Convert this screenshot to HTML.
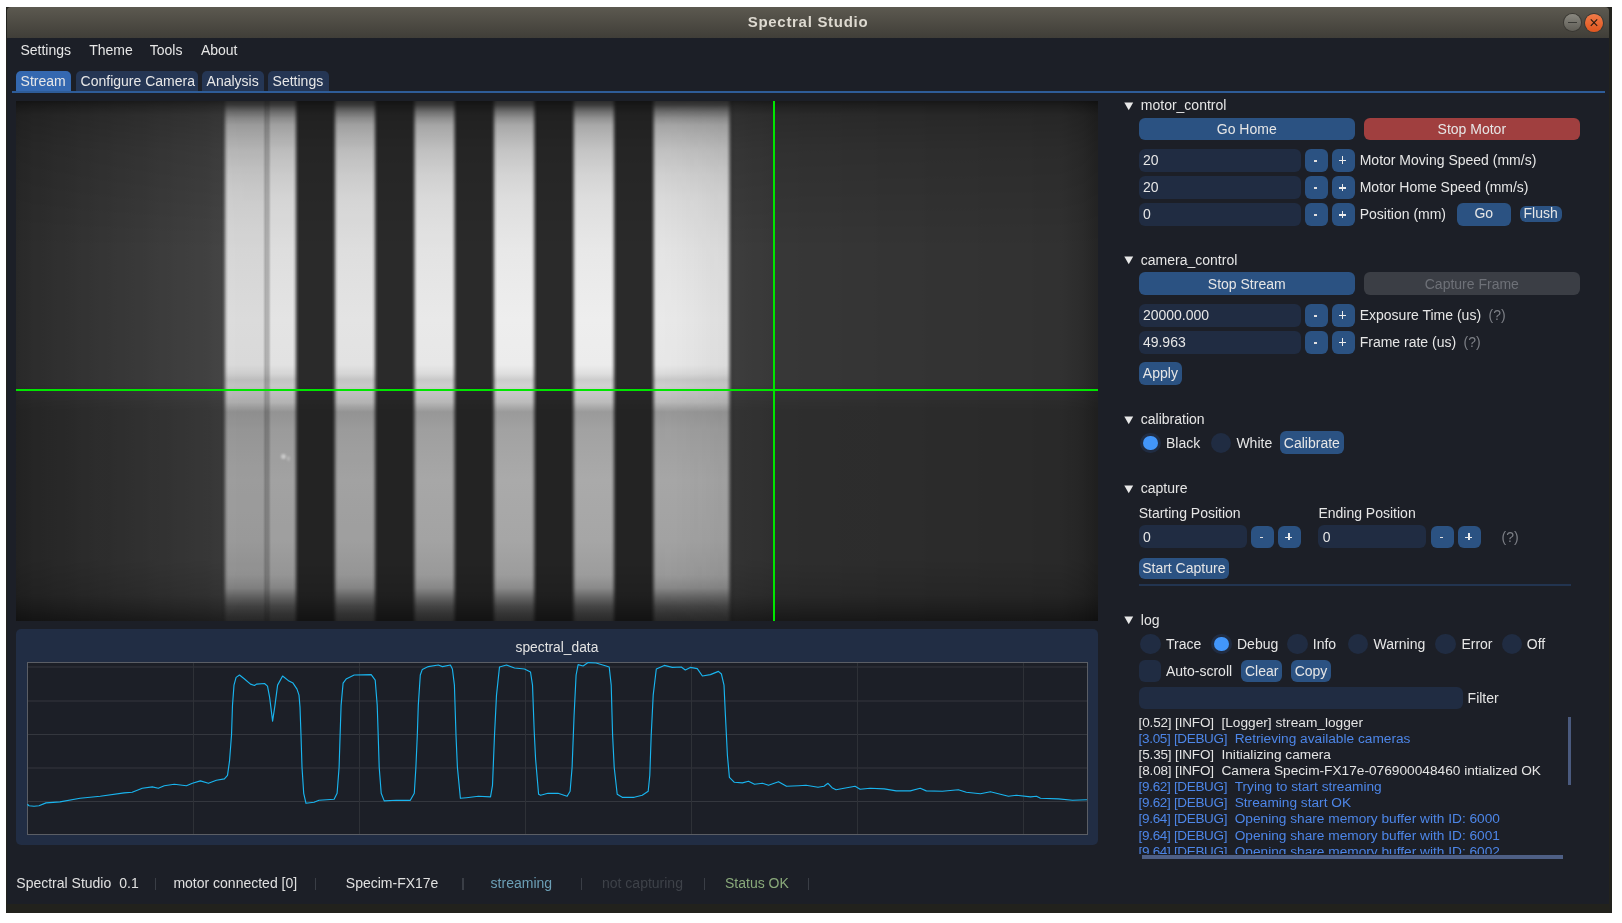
<!DOCTYPE html><html><head><meta charset="utf-8"><title>Spectral Studio</title><style>
*{margin:0;padding:0;box-sizing:border-box}
html,body{width:1622px;height:923px;overflow:hidden;background:#ffffff;font-family:"Liberation Sans",sans-serif}
.a{position:absolute}
.t{position:absolute;font-size:14px;line-height:16px;white-space:pre;color:#e3e3e3;-webkit-font-smoothing:antialiased}
body{will-change:transform}
</style></head><body>
<div class="a" style="left:6.0px;top:7.0px;width:1606.0px;height:906.0px;background:#22221d;"></div>
<div class="a" style="left:7.0px;top:38.0px;width:1602.0px;height:866.0px;background:#1c1f27;"></div>
<div class="a" style="left:7.0px;top:7.0px;width:1602.0px;height:31.0px;background:linear-gradient(#5c5950,#403e38);border-radius:4px 4px 0 0;"></div>
<div class="t" style="left:608px;width:400px;text-align:center;top:14.2px;font-size:15px;letter-spacing:0.7px;font-weight:bold;color:#dedad1">Spectral Studio</div>
<div class="a" style="left:1563.5px;top:13.8px;width:17.6px;height:17.6px;border-radius:50%;background:linear-gradient(#8a8880,#5f5d56);box-shadow:0 0 0 1px #3a3833"></div>
<div class="a" style="left:1567.5px;top:21.8px;width:9.0px;height:1.5px;background:#3a3a36;"></div>
<div class="a" style="left:1585.2px;top:13.8px;width:17.8px;height:17.8px;border-radius:50%;background:linear-gradient(#f07a48,#e0561f);box-shadow:0 0 0 1px #3a3833"></div>
<svg class="a" style="left:1585px;top:14px" width="18" height="18"><path d="M5.8 5.4 L12.2 11.8 M12.2 5.4 L5.8 11.8" stroke="#2a1a10" stroke-width="1.2"/></svg>
<div class="t" style="left:20.4px;top:41.7px;color:#e6e6e6;">Settings</div>
<div class="t" style="left:89.2px;top:41.7px;color:#e6e6e6;">Theme</div>
<div class="t" style="left:149.8px;top:41.7px;color:#e6e6e6;">Tools</div>
<div class="t" style="left:200.9px;top:41.7px;color:#e6e6e6;">About</div>
<div class="a" style="left:16.0px;top:71.0px;width:55.0px;height:21.0px;background:#3468b0;border-radius:5px 5px 0 0;"></div>
<div class="t" style="left:20.6px;top:73.1px;color:#e8e8e8;">Stream</div>
<div class="a" style="left:76.0px;top:71.0px;width:122.0px;height:21.0px;background:#253654;border-radius:5px 5px 0 0;"></div>
<div class="t" style="left:80.6px;top:73.1px;color:#e8e8e8;">Configure Camera</div>
<div class="a" style="left:202.0px;top:71.0px;width:61.5px;height:21.0px;background:#253654;border-radius:5px 5px 0 0;"></div>
<div class="t" style="left:206.6px;top:73.1px;color:#e8e8e8;">Analysis</div>
<div class="a" style="left:268.0px;top:71.0px;width:61.0px;height:21.0px;background:#253654;border-radius:5px 5px 0 0;"></div>
<div class="t" style="left:272.6px;top:73.1px;color:#e8e8e8;">Settings</div>
<div class="a" style="left:12.0px;top:91.0px;width:1593.0px;height:2.0px;background:#2e5c98;"></div>
<div class="a" style="left:16px;top:101px;width:1082px;height:519.5px;background:linear-gradient(to bottom,#737373 0px,#999999 5px,#c7c7c7 14px,#e0e0e0 49px,#ffffff 149px,#ffffff 283px,#ebebeb 293px,#d6d6d6 309px,#d6d6d6 459px,#bdbdbd 494px,#999999 507px,#737373 519px),linear-gradient(to right,#282828 0px,#2a2a2a 6px,#2b2b2b 12px,#2d2d2d 18px,#2d2d2d 24px,#2e2e2e 30px,#2f2f2f 36px,#303030 42px,#303030 48px,#313131 54px,#323232 60px,#333333 66px,#333333 72px,#343434 78px,#353535 84px,#353535 90px,#363636 96px,#373737 102px,#373737 108px,#383838 114px,#393939 120px,#393939 126px,#3a3a3a 132px,#3b3b3b 138px,#3c3c3c 144px,#3c3c3c 150px,#3d3d3d 156px,#3e3e3e 162px,#3e3e3e 168px,#3f3f3f 174px,#404040 180px,#404040 186px,#414141 192px,#434343 198px,#444444 204px,#3e3e3e 210px,#363636 216px,#2d2d2d 222px,#2a2a2a 228px,#2a2a2a 234px,#2a2a2a 240px,#2a2a2a 246px,#2a2a2a 252px,#2a2a2a 258px,#2a2a2a 264px,#2a2a2a 270px,#2a2a2a 276px,#2a2a2a 282px,#2a2a2a 288px,#2a2a2a 294px,#2a2a2a 300px,#2a2a2a 306px,#2a2a2a 312px,#2a2a2a 318px,#2a2a2a 324px,#2a2a2a 330px,#2a2a2a 336px,#2a2a2a 342px,#2a2a2a 348px,#2a2a2a 354px,#2a2a2a 360px,#2a2a2a 366px,#2a2a2a 372px,#2a2a2a 378px,#2a2a2a 384px,#2a2a2a 390px,#2a2a2a 396px,#2a2a2a 402px,#2a2a2a 408px,#2a2a2a 414px,#2a2a2a 420px,#2a2a2a 426px,#2a2a2a 432px,#2a2a2a 438px,#2a2a2a 444px,#2a2a2a 450px,#2a2a2a 456px,#2a2a2a 462px,#2a2a2a 468px,#2a2a2a 474px,#2a2a2a 480px,#2a2a2a 486px,#2a2a2a 492px,#2a2a2a 498px,#2a2a2a 504px,#2a2a2a 510px,#2a2a2a 516px,#2a2a2a 522px,#2a2a2a 528px,#2a2a2a 534px,#2a2a2a 540px,#2a2a2a 546px,#2a2a2a 552px,#2a2a2a 558px,#2a2a2a 564px,#2a2a2a 570px,#2a2a2a 576px,#2a2a2a 582px,#2a2a2a 588px,#2a2a2a 594px,#2a2a2a 600px,#2a2a2a 606px,#2a2a2a 612px,#2a2a2a 618px,#2a2a2a 624px,#2a2a2a 630px,#2a2a2a 636px,#2a2a2a 642px,#2a2a2a 648px,#2a2a2a 654px,#2a2a2a 660px,#2a2a2a 666px,#2a2a2a 672px,#2a2a2a 678px,#2a2a2a 684px,#2a2a2a 690px,#2a2a2a 696px,#2a2a2a 702px,#303030 708px,#393939 714px,#3d3d3d 720px,#3c3c3c 726px,#3b3b3b 732px,#3a3a3a 738px,#3a3a3a 744px,#393939 750px,#383838 756px,#373737 762px,#373737 768px,#373737 774px,#373737 780px,#363636 786px,#363636 792px,#363636 798px,#363636 804px,#363636 810px,#363636 816px,#363636 822px,#353535 828px,#353535 834px,#353535 840px,#353535 846px,#353535 852px,#353535 858px,#343434 864px,#343434 870px,#343434 876px,#343434 882px,#343434 888px,#343434 894px,#343434 900px,#343434 906px,#333333 912px,#333333 918px,#333333 924px,#333333 930px,#333333 936px,#333333 942px,#333333 948px,#333333 954px,#333333 960px,#323232 966px,#323232 972px,#323232 978px,#323232 984px,#323232 990px,#323232 996px,#323232 1002px,#323232 1008px,#323232 1014px,#313131 1020px,#313131 1026px,#313131 1032px,#313131 1038px,#313131 1044px,#303030 1050px,#2e2e2e 1056px,#2d2d2d 1062px,#2b2b2b 1068px,#282828 1074px,#252525 1080px);background-blend-mode:multiply"></div>
<div class="a" style="left:16px;top:101px;width:1082px;height:519.5px;background:linear-gradient(to bottom,#2c2c2c 0px,#3c3c3c 4px,#545454 7px,#707070 11px,#909090 17px,#a8a8a8 24px,#b4b4b4 34px,#c4c4c4 49px,#d4d4d4 74px,#dedede 99px,#e8e8e8 149px,#eeeeee 219px,#ececec 264px,#dedede 273px,#cccccc 279px,#d2d2d2 285px,#c8c8c8 291px,#bcbcbc 301px,#9a9a9a 311px,#a2a2a2 329px,#aaaaaa 379px,#a6a6a6 439px,#9c9c9c 474px,#8a8a8a 487px,#626262 497px,#464646 505px,#343434 513px,#2a2a2a 519.5px);-webkit-mask-image:linear-gradient(to right,rgba(0,0,0,0.000) 204.8px,rgba(0,0,0,0.000) 205.8px,rgba(0,0,0,0.141) 207.4px,rgba(0,0,0,0.450) 209.0px,rgba(0,0,0,0.759) 210.6px,rgba(0,0,0,0.900) 212.2px,rgba(0,0,0,0.900) 246.0px,rgba(0,0,0,0.900) 246.5px,rgba(0,0,0,0.887) 247.0px,rgba(0,0,0,0.852) 247.5px,rgba(0,0,0,0.804) 248.0px,rgba(0,0,0,0.753) 248.5px,rgba(0,0,0,0.705) 249.0px,rgba(0,0,0,0.670) 249.5px,rgba(0,0,0,0.657) 250.0px,rgba(0,0,0,0.694) 250.5px,rgba(0,0,0,0.694) 251.0px,rgba(0,0,0,0.694) 251.5px,rgba(0,0,0,0.694) 252.0px,rgba(0,0,0,0.708) 252.5px,rgba(0,0,0,0.744) 253.0px,rgba(0,0,0,0.794) 253.5px,rgba(0,0,0,0.849) 254.0px,rgba(0,0,0,0.899) 254.5px,rgba(0,0,0,0.936) 255.0px,rgba(0,0,0,0.950) 255.5px,rgba(0,0,0,0.950) 256.0px,rgba(0,0,0,0.950) 276.8px,rgba(0,0,0,0.802) 278.4px,rgba(0,0,0,0.475) 280.0px,rgba(0,0,0,0.148) 281.6px,rgba(0,0,0,0.000) 283.2px,rgba(0,0,0,0.000) 284.2px,rgba(0,0,0,0.000) 314.8px,rgba(0,0,0,0.000) 315.8px,rgba(0,0,0,0.148) 317.4px,rgba(0,0,0,0.475) 319.0px,rgba(0,0,0,0.802) 320.6px,rgba(0,0,0,0.950) 322.2px,rgba(0,0,0,0.950) 355.8px,rgba(0,0,0,0.802) 357.4px,rgba(0,0,0,0.475) 359.0px,rgba(0,0,0,0.148) 360.6px,rgba(0,0,0,0.000) 362.2px,rgba(0,0,0,0.000) 363.2px,rgba(0,0,0,0.000) 394.3px,rgba(0,0,0,0.000) 395.3px,rgba(0,0,0,0.153) 396.9px,rgba(0,0,0,0.490) 398.5px,rgba(0,0,0,0.827) 400.1px,rgba(0,0,0,0.980) 401.7px,rgba(0,0,0,0.980) 435.3px,rgba(0,0,0,0.827) 436.9px,rgba(0,0,0,0.490) 438.5px,rgba(0,0,0,0.153) 440.1px,rgba(0,0,0,0.000) 441.7px,rgba(0,0,0,0.000) 442.7px,rgba(0,0,0,0.000) 473.8px,rgba(0,0,0,0.000) 474.8px,rgba(0,0,0,0.156) 476.4px,rgba(0,0,0,0.500) 478.0px,rgba(0,0,0,0.844) 479.6px,rgba(0,0,0,1.000) 481.2px,rgba(0,0,0,1.000) 515.1px,rgba(0,0,0,0.844) 516.7px,rgba(0,0,0,0.500) 518.3px,rgba(0,0,0,0.156) 519.9px,rgba(0,0,0,0.000) 521.5px,rgba(0,0,0,0.000) 522.5px,rgba(0,0,0,0.000) 553.5px,rgba(0,0,0,0.000) 554.5px,rgba(0,0,0,0.156) 556.1px,rgba(0,0,0,0.500) 557.7px,rgba(0,0,0,0.844) 559.3px,rgba(0,0,0,1.000) 560.9px,rgba(0,0,0,1.000) 594.8px,rgba(0,0,0,0.844) 596.4px,rgba(0,0,0,0.500) 598.0px,rgba(0,0,0,0.156) 599.6px,rgba(0,0,0,0.000) 601.2px,rgba(0,0,0,0.000) 602.2px,rgba(0,0,0,0.000) 633.4px,rgba(0,0,0,0.000) 634.4px,rgba(0,0,0,0.153) 636.0px,rgba(0,0,0,0.490) 637.6px,rgba(0,0,0,0.827) 639.2px,rgba(0,0,0,0.980) 640.8px,rgba(0,0,0,0.965) 664.0px,rgba(0,0,0,0.945) 684.0px,rgba(0,0,0,0.925) 704.0px,rgba(0,0,0,0.920) 710.3px,rgba(0,0,0,0.776) 711.9px,rgba(0,0,0,0.460) 713.5px,rgba(0,0,0,0.144) 715.1px,rgba(0,0,0,0.000) 716.7px,rgba(0,0,0,0.000) 717.7px);mask-image:linear-gradient(to right,rgba(0,0,0,0.000) 204.8px,rgba(0,0,0,0.000) 205.8px,rgba(0,0,0,0.141) 207.4px,rgba(0,0,0,0.450) 209.0px,rgba(0,0,0,0.759) 210.6px,rgba(0,0,0,0.900) 212.2px,rgba(0,0,0,0.900) 246.0px,rgba(0,0,0,0.900) 246.5px,rgba(0,0,0,0.887) 247.0px,rgba(0,0,0,0.852) 247.5px,rgba(0,0,0,0.804) 248.0px,rgba(0,0,0,0.753) 248.5px,rgba(0,0,0,0.705) 249.0px,rgba(0,0,0,0.670) 249.5px,rgba(0,0,0,0.657) 250.0px,rgba(0,0,0,0.694) 250.5px,rgba(0,0,0,0.694) 251.0px,rgba(0,0,0,0.694) 251.5px,rgba(0,0,0,0.694) 252.0px,rgba(0,0,0,0.708) 252.5px,rgba(0,0,0,0.744) 253.0px,rgba(0,0,0,0.794) 253.5px,rgba(0,0,0,0.849) 254.0px,rgba(0,0,0,0.899) 254.5px,rgba(0,0,0,0.936) 255.0px,rgba(0,0,0,0.950) 255.5px,rgba(0,0,0,0.950) 256.0px,rgba(0,0,0,0.950) 276.8px,rgba(0,0,0,0.802) 278.4px,rgba(0,0,0,0.475) 280.0px,rgba(0,0,0,0.148) 281.6px,rgba(0,0,0,0.000) 283.2px,rgba(0,0,0,0.000) 284.2px,rgba(0,0,0,0.000) 314.8px,rgba(0,0,0,0.000) 315.8px,rgba(0,0,0,0.148) 317.4px,rgba(0,0,0,0.475) 319.0px,rgba(0,0,0,0.802) 320.6px,rgba(0,0,0,0.950) 322.2px,rgba(0,0,0,0.950) 355.8px,rgba(0,0,0,0.802) 357.4px,rgba(0,0,0,0.475) 359.0px,rgba(0,0,0,0.148) 360.6px,rgba(0,0,0,0.000) 362.2px,rgba(0,0,0,0.000) 363.2px,rgba(0,0,0,0.000) 394.3px,rgba(0,0,0,0.000) 395.3px,rgba(0,0,0,0.153) 396.9px,rgba(0,0,0,0.490) 398.5px,rgba(0,0,0,0.827) 400.1px,rgba(0,0,0,0.980) 401.7px,rgba(0,0,0,0.980) 435.3px,rgba(0,0,0,0.827) 436.9px,rgba(0,0,0,0.490) 438.5px,rgba(0,0,0,0.153) 440.1px,rgba(0,0,0,0.000) 441.7px,rgba(0,0,0,0.000) 442.7px,rgba(0,0,0,0.000) 473.8px,rgba(0,0,0,0.000) 474.8px,rgba(0,0,0,0.156) 476.4px,rgba(0,0,0,0.500) 478.0px,rgba(0,0,0,0.844) 479.6px,rgba(0,0,0,1.000) 481.2px,rgba(0,0,0,1.000) 515.1px,rgba(0,0,0,0.844) 516.7px,rgba(0,0,0,0.500) 518.3px,rgba(0,0,0,0.156) 519.9px,rgba(0,0,0,0.000) 521.5px,rgba(0,0,0,0.000) 522.5px,rgba(0,0,0,0.000) 553.5px,rgba(0,0,0,0.000) 554.5px,rgba(0,0,0,0.156) 556.1px,rgba(0,0,0,0.500) 557.7px,rgba(0,0,0,0.844) 559.3px,rgba(0,0,0,1.000) 560.9px,rgba(0,0,0,1.000) 594.8px,rgba(0,0,0,0.844) 596.4px,rgba(0,0,0,0.500) 598.0px,rgba(0,0,0,0.156) 599.6px,rgba(0,0,0,0.000) 601.2px,rgba(0,0,0,0.000) 602.2px,rgba(0,0,0,0.000) 633.4px,rgba(0,0,0,0.000) 634.4px,rgba(0,0,0,0.153) 636.0px,rgba(0,0,0,0.490) 637.6px,rgba(0,0,0,0.827) 639.2px,rgba(0,0,0,0.980) 640.8px,rgba(0,0,0,0.965) 664.0px,rgba(0,0,0,0.945) 684.0px,rgba(0,0,0,0.925) 704.0px,rgba(0,0,0,0.920) 710.3px,rgba(0,0,0,0.776) 711.9px,rgba(0,0,0,0.460) 713.5px,rgba(0,0,0,0.144) 715.1px,rgba(0,0,0,0.000) 716.7px,rgba(0,0,0,0.000) 717.7px)"></div>
<div class="a" style="left:280.5px;top:454px;width:5px;height:5px;border-radius:50%;background:#cacaca;filter:blur(1px)"></div>
<div class="a" style="left:287px;top:456px;width:3px;height:5px;border-radius:50%;background:#b8b8b8;filter:blur(1px)"></div>
<div class="a" style="left:16.0px;top:389.4px;width:1082.0px;height:2.0px;background:#00e600;"></div>
<div class="a" style="left:773.1px;top:101.0px;width:2.2px;height:519.5px;background:#00e600;"></div>
<div class="a" style="left:16.0px;top:629.0px;width:1082.0px;height:216.0px;background:#212d44;border-radius:5px;"></div>
<div class="t" style="left:515.5px;top:639.7px;color:#e3e3e3;font-size:13.8px;">spectral_data</div>
<div class="a" style="left:27.0px;top:662.0px;width:1061.0px;height:173.0px;background:#1c1f27;"></div>
<svg class="a" style="left:27px;top:662px" width="1061" height="173"><line x1="0" x2="1060" y1="5" y2="5" stroke="#34373e" stroke-width="1"/><line x1="0" x2="1060" y1="39" y2="39" stroke="#34373e" stroke-width="1"/><line x1="0" x2="1060" y1="72.5" y2="72.5" stroke="#34373e" stroke-width="1"/><line x1="0" x2="1060" y1="106" y2="106" stroke="#34373e" stroke-width="1"/><line x1="0" x2="1060" y1="139.5" y2="139.5" stroke="#34373e" stroke-width="1"/><line x1="166.5" x2="166.5" y1="0" y2="172" stroke="#2e3137" stroke-width="1"/><line x1="332.5" x2="332.5" y1="0" y2="172" stroke="#2e3137" stroke-width="1"/><line x1="498.5" x2="498.5" y1="0" y2="172" stroke="#2e3137" stroke-width="1"/><line x1="664.5" x2="664.5" y1="0" y2="172" stroke="#2e3137" stroke-width="1"/><line x1="830.5" x2="830.5" y1="0" y2="172" stroke="#2e3137" stroke-width="1"/><line x1="996.5" x2="996.5" y1="0" y2="172" stroke="#2e3137" stroke-width="1"/><rect x="0.5" y="0.5" width="1060" height="172" fill="none" stroke="#5b5e65" stroke-width="1"/><polyline points="0.4,142.3 2.0,143.7 7.0,144.3 12.0,143.7 19.0,140.9 33.0,139.9 53.1,136.3 73.2,134.3 97.2,130.9 105.2,130.3 115.3,126.3 125.3,124.9 131.3,126.3 137.3,123.7 147.3,122.3 159.4,123.7 165.4,121.3 173.4,118.9 181.4,121.3 189.4,118.3 197.4,116.9 200.5,113.3 202.5,99.2 204.5,73.2 205.5,43.1 207.0,23.1 209.1,15.4 212.5,13.0 217.5,17.0 223.5,22.1 227.5,23.5 229.5,22.1 237.5,21.5 240.5,24.1 242.6,35.1 245.6,59.1 248.0,43.1 250.6,23.1 255.6,14.0 262.0,19.1 266.0,21.1 270.0,27.1 272.0,33.1 273.0,45.1 274.0,73.2 275.0,105.2 276.7,131.3 279.0,141.3 287.0,140.3 292.0,138.3 307.1,137.3 310.1,131.3 312.1,105.2 313.1,73.2 314.1,43.1 316.1,21.1 319.1,17.1 327.2,13.0 344.2,12.6 348.2,18.1 350.2,43.1 351.2,73.2 352.2,105.2 354.2,131.3 357.2,138.9 369.3,138.3 383.3,138.3 387.3,131.3 388.9,105.2 390.3,73.2 391.3,43.1 393.3,13.0 395.3,7.4 401.3,4.6 411.3,3.0 415.4,4.6 423.4,3.0 425.4,7.0 427.4,23.1 429.0,73.2 430.4,105.2 433.4,136.3 439.4,135.7 451.4,134.3 463.5,134.9 465.5,123.3 467.5,73.2 469.5,33.1 472.5,5.0 479.5,3.0 487.5,6.0 497.5,7.0 503.5,10.0 505.5,23.1 507.2,69.2 508.6,97.2 511.6,132.3 513.6,133.3 521.0,131.3 531.0,131.3 540.1,134.3 543.1,129.3 545.1,105.2 547.1,53.1 549.1,13.0 551.1,2.6 556.1,4.0 561.1,0.6 569.1,1.0 579.1,4.0 582.2,5.0 584.2,23.1 585.6,73.2 587.2,105.2 590.2,132.3 595.2,135.3 607.2,135.3 615.2,133.3 621.2,129.3 622.8,113.3 624.2,73.2 626.2,33.1 629.3,7.0 637.3,3.4 645.3,5.4 654.3,5.0 658.3,8.0 663.3,5.4 670.3,6.6 675.4,14.0 683.4,12.6 691.4,9.4 694.4,12.0 697.0,23.1 698.4,53.1 700.4,93.2 702.4,115.3 707.4,120.3 715.4,120.9 721.5,119.3 727.5,122.3 735.5,121.3 741.5,123.3 751.5,119.7 759.5,124.3 771.6,123.7 779.0,123.3 791.0,125.3 797.0,124.3 801.0,121.3 805.0,125.7 809.0,127.7 817.1,126.3 828.1,124.3 833.1,127.3 843.1,126.3 857.2,126.9 869.2,128.9 883.2,128.9 893.2,126.3 899.3,128.9 915.3,129.3 931.3,127.7 939.3,130.3 953.4,131.7 963.4,129.7 973.4,132.3 981.4,134.3 989.4,133.3 1003.5,134.9 1009.5,134.3 1013.5,136.3 1031.5,136.9 1045.5,138.3 1060.0,137.7" fill="none" stroke="#19b4ee" stroke-width="1.15" stroke-linejoin="round"/></svg>
<svg class="a" style="left:1124.3px;top:101.7px" width="10" height="9"><polygon points="0.3,0.5 9.2,0.5 4.75,8.2" fill="#e8e8e8"/></svg>
<div class="t" style="left:1140.8px;top:96.8px;color:#e6e6e6;">motor_control</div>
<div class="a" style="left:1138.5px;top:117.5px;width:216.5px;height:22.3px;background:#2b5282;border-radius:6px;"></div>
<div class="t" style="left:1138.5px;width:216.5px;text-align:center;top:120.7px;color:#e6e6e6">Go Home</div>
<div class="a" style="left:1363.7px;top:117.5px;width:216.3px;height:22.3px;background:#a03f3f;border-radius:6px;"></div>
<div class="t" style="left:1363.7px;width:216.3px;text-align:center;top:120.7px;color:#e6e6e6">Stop Motor</div>
<div class="a" style="left:1138.6px;top:149.0px;width:162.6px;height:22.6px;background:#202c42;border-radius:6px;"></div>
<div class="t" style="left:1142.9px;top:151.5px;color:#e6e6e6;">20</div>
<div class="a" style="left:1304.8px;top:149.0px;width:23.2px;height:22.6px;background:#2b5282;border-radius:6px;"></div>
<div class="a" style="left:1332.0px;top:149.0px;width:23.2px;height:22.6px;background:#2b5282;border-radius:6px;"></div>
<div class="a" style="left:1313.7px;top:160.2px;width:3.5px;height:1.6px;background:#e0e0e0;"></div>
<div class="a" style="left:1339.1px;top:160.0px;width:7.2px;height:1.4px;background:#ececec;"></div>
<div class="a" style="left:1342.0px;top:156.3px;width:1.4px;height:7.6px;background:#ececec;"></div>
<div class="t" style="left:1359.7px;top:151.5px;color:#e6e6e6;">Motor Moving Speed (mm/s)</div>
<div class="a" style="left:1138.6px;top:176.2px;width:162.6px;height:22.6px;background:#202c42;border-radius:6px;"></div>
<div class="t" style="left:1142.9px;top:178.7px;color:#e6e6e6;">20</div>
<div class="a" style="left:1304.8px;top:176.2px;width:23.2px;height:22.6px;background:#2b5282;border-radius:6px;"></div>
<div class="a" style="left:1332.0px;top:176.2px;width:23.2px;height:22.6px;background:#2b5282;border-radius:6px;"></div>
<div class="a" style="left:1313.7px;top:187.4px;width:3.5px;height:1.6px;background:#e0e0e0;"></div>
<div class="a" style="left:1339.1px;top:187.2px;width:7.2px;height:1.4px;background:#ececec;"></div>
<div class="a" style="left:1342.0px;top:183.5px;width:1.4px;height:7.6px;background:#ececec;"></div>
<div class="t" style="left:1359.7px;top:178.7px;color:#e6e6e6;">Motor Home Speed (mm/s)</div>
<div class="a" style="left:1138.6px;top:203.2px;width:162.6px;height:22.6px;background:#202c42;border-radius:6px;"></div>
<div class="t" style="left:1142.9px;top:205.7px;color:#e6e6e6;">0</div>
<div class="a" style="left:1304.8px;top:203.2px;width:23.2px;height:22.6px;background:#2b5282;border-radius:6px;"></div>
<div class="a" style="left:1332.0px;top:203.2px;width:23.2px;height:22.6px;background:#2b5282;border-radius:6px;"></div>
<div class="a" style="left:1313.7px;top:214.4px;width:3.5px;height:1.6px;background:#e0e0e0;"></div>
<div class="a" style="left:1339.1px;top:214.2px;width:7.2px;height:1.4px;background:#ececec;"></div>
<div class="a" style="left:1342.0px;top:210.5px;width:1.4px;height:7.6px;background:#ececec;"></div>
<div class="t" style="left:1359.7px;top:205.7px;color:#e6e6e6;">Position (mm)</div>
<div class="a" style="left:1456.8px;top:203.2px;width:53.9px;height:22.6px;background:#2b5282;border-radius:6px;"></div>
<div class="t" style="left:1456.8px;width:53.9px;text-align:center;top:205.4px;color:#e6e6e6">Go</div>
<div class="a" style="left:1519.6px;top:206.0px;width:42.1px;height:16.3px;background:#2b5282;border-radius:6px;"></div>
<div class="t" style="left:1519.6px;width:42.1px;text-align:center;top:205.4px;color:#e6e6e6">Flush</div>
<svg class="a" style="left:1124.3px;top:255.6px" width="10" height="9"><polygon points="0.3,0.5 9.2,0.5 4.75,8.2" fill="#e8e8e8"/></svg>
<div class="t" style="left:1140.8px;top:251.7px;color:#e6e6e6;">camera_control</div>
<div class="a" style="left:1138.5px;top:272.4px;width:216.5px;height:22.5px;background:#2b5282;border-radius:6px;"></div>
<div class="t" style="left:1138.5px;width:216.5px;text-align:center;top:275.6px;color:#e6e6e6">Stop Stream</div>
<div class="a" style="left:1363.7px;top:272.4px;width:216.3px;height:22.5px;background:#3b3e45;border-radius:6px;"></div>
<div class="t" style="left:1363.7px;width:216.3px;text-align:center;top:275.6px;color:#6e7178">Capture Frame</div>
<div class="a" style="left:1138.6px;top:304.0px;width:162.6px;height:22.6px;background:#202c42;border-radius:6px;"></div>
<div class="t" style="left:1142.9px;top:306.5px;color:#e6e6e6;">20000.000</div>
<div class="a" style="left:1304.8px;top:304.0px;width:23.2px;height:22.6px;background:#2b5282;border-radius:6px;"></div>
<div class="a" style="left:1332.0px;top:304.0px;width:23.2px;height:22.6px;background:#2b5282;border-radius:6px;"></div>
<div class="a" style="left:1313.7px;top:315.2px;width:3.5px;height:1.6px;background:#e0e0e0;"></div>
<div class="a" style="left:1339.1px;top:315.0px;width:7.2px;height:1.4px;background:#ececec;"></div>
<div class="a" style="left:1342.0px;top:311.3px;width:1.4px;height:7.6px;background:#ececec;"></div>
<div class="t" style="left:1359.7px;top:306.5px;color:#e6e6e6;">Exposure Time (us)</div>
<div class="t" style="left:1488.5px;top:306.5px;color:#7c7f86;">(?)</div>
<div class="a" style="left:1138.6px;top:331.0px;width:162.6px;height:22.6px;background:#202c42;border-radius:6px;"></div>
<div class="t" style="left:1142.9px;top:333.5px;color:#e6e6e6;">49.963</div>
<div class="a" style="left:1304.8px;top:331.0px;width:23.2px;height:22.6px;background:#2b5282;border-radius:6px;"></div>
<div class="a" style="left:1332.0px;top:331.0px;width:23.2px;height:22.6px;background:#2b5282;border-radius:6px;"></div>
<div class="a" style="left:1313.7px;top:342.2px;width:3.5px;height:1.6px;background:#e0e0e0;"></div>
<div class="a" style="left:1339.1px;top:342.0px;width:7.2px;height:1.4px;background:#ececec;"></div>
<div class="a" style="left:1342.0px;top:338.3px;width:1.4px;height:7.6px;background:#ececec;"></div>
<div class="t" style="left:1359.7px;top:333.5px;color:#e6e6e6;">Frame rate (us)</div>
<div class="t" style="left:1463.6px;top:333.5px;color:#7c7f86;">(?)</div>
<div class="a" style="left:1138.7px;top:361.8px;width:43.4px;height:23.0px;background:#2b5282;border-radius:6px;"></div>
<div class="t" style="left:1138.7px;width:43.4px;text-align:center;top:365.3px;color:#e6e6e6">Apply</div>
<svg class="a" style="left:1124.3px;top:415.5px" width="10" height="9"><polygon points="0.3,0.5 9.2,0.5 4.75,8.2" fill="#e8e8e8"/></svg>
<div class="t" style="left:1140.8px;top:411.0px;color:#e6e6e6;">calibration</div>
<div class="a" style="left:1140.0px;top:432.7px;width:20.6px;height:20.6px;border-radius:50%;background:#202c42"></div>
<div class="a" style="left:1142.9px;top:435.6px;width:14.8px;height:14.8px;border-radius:50%;background:#4296fa"></div>
<div class="t" style="left:1166.0px;top:435.3px;color:#e6e6e6;">Black</div>
<div class="a" style="left:1210.6px;top:432.7px;width:20.6px;height:20.6px;border-radius:50%;background:#202c42"></div>
<div class="t" style="left:1236.4px;top:435.3px;color:#e6e6e6;">White</div>
<div class="a" style="left:1280.0px;top:431.4px;width:63.7px;height:22.8px;background:#2b5282;border-radius:6px;"></div>
<div class="t" style="left:1280.0px;width:63.7px;text-align:center;top:434.8px;color:#e6e6e6">Calibrate</div>
<svg class="a" style="left:1124.3px;top:484.8px" width="10" height="9"><polygon points="0.3,0.5 9.2,0.5 4.75,8.2" fill="#e8e8e8"/></svg>
<div class="t" style="left:1140.8px;top:480.0px;color:#e6e6e6;">capture</div>
<div class="t" style="left:1138.7px;top:504.9px;color:#e6e6e6;">Starting Position</div>
<div class="t" style="left:1318.4px;top:504.9px;color:#e6e6e6;">Ending Position</div>
<div class="a" style="left:1138.6px;top:525.3px;width:108.0px;height:22.7px;background:#202c42;border-radius:6px;"></div>
<div class="t" style="left:1142.9px;top:529.0px;color:#e6e6e6;">0</div>
<div class="a" style="left:1251.0px;top:525.5px;width:23.2px;height:22.6px;background:#2b5282;border-radius:6px;"></div>
<div class="a" style="left:1278.2px;top:525.5px;width:23.2px;height:22.6px;background:#2b5282;border-radius:6px;"></div>
<div class="a" style="left:1259.9px;top:536.7px;width:3.5px;height:1.6px;background:#e0e0e0;"></div>
<div class="a" style="left:1285.3px;top:536.5px;width:7.2px;height:1.4px;background:#ececec;"></div>
<div class="a" style="left:1288.2px;top:532.8px;width:1.4px;height:7.6px;background:#ececec;"></div>
<div class="a" style="left:1318.4px;top:525.3px;width:107.6px;height:22.7px;background:#202c42;border-radius:6px;"></div>
<div class="t" style="left:1322.7px;top:529.0px;color:#e6e6e6;">0</div>
<div class="a" style="left:1431.0px;top:525.5px;width:23.2px;height:22.6px;background:#2b5282;border-radius:6px;"></div>
<div class="a" style="left:1458.2px;top:525.5px;width:23.2px;height:22.6px;background:#2b5282;border-radius:6px;"></div>
<div class="a" style="left:1439.9px;top:536.7px;width:3.5px;height:1.6px;background:#e0e0e0;"></div>
<div class="a" style="left:1465.3px;top:536.5px;width:7.2px;height:1.4px;background:#ececec;"></div>
<div class="a" style="left:1468.2px;top:532.8px;width:1.4px;height:7.6px;background:#ececec;"></div>
<div class="t" style="left:1501.5px;top:528.5px;color:#7c7f86;">(?)</div>
<div class="a" style="left:1138.6px;top:557.8px;width:90.4px;height:21.2px;background:#2b5282;border-radius:6px;"></div>
<div class="t" style="left:1138.6px;width:90.4px;text-align:center;top:560.4px;color:#e6e6e6">Start Capture</div>
<div class="a" style="left:1138.6px;top:584.3px;width:432.9px;height:1.5px;background:#223450;"></div>
<svg class="a" style="left:1124.3px;top:616px" width="10" height="9"><polygon points="0.3,0.5 9.2,0.5 4.75,8.2" fill="#e8e8e8"/></svg>
<div class="t" style="left:1140.8px;top:612.0px;color:#e6e6e6;">log</div>
<div class="a" style="left:1140.2px;top:633.7px;width:20.6px;height:20.6px;border-radius:50%;background:#202c42"></div>
<div class="t" style="left:1166.0px;top:636.3px;color:#e6e6e6;">Trace</div>
<div class="a" style="left:1211.4px;top:633.7px;width:20.6px;height:20.6px;border-radius:50%;background:#202c42"></div>
<div class="a" style="left:1214.3px;top:636.6px;width:14.8px;height:14.8px;border-radius:50%;background:#4296fa"></div>
<div class="t" style="left:1237.0px;top:636.3px;color:#e6e6e6;">Debug</div>
<div class="a" style="left:1287.2px;top:633.7px;width:20.6px;height:20.6px;border-radius:50%;background:#202c42"></div>
<div class="t" style="left:1312.8px;top:636.3px;color:#e6e6e6;">Info</div>
<div class="a" style="left:1347.7px;top:633.7px;width:20.6px;height:20.6px;border-radius:50%;background:#202c42"></div>
<div class="t" style="left:1373.6px;top:636.3px;color:#e6e6e6;">Warning</div>
<div class="a" style="left:1435.2px;top:633.7px;width:20.6px;height:20.6px;border-radius:50%;background:#202c42"></div>
<div class="t" style="left:1461.4px;top:636.3px;color:#e6e6e6;">Error</div>
<div class="a" style="left:1501.5px;top:633.7px;width:20.6px;height:20.6px;border-radius:50%;background:#202c42"></div>
<div class="t" style="left:1526.8px;top:636.3px;color:#e6e6e6;">Off</div>
<div class="a" style="left:1138.6px;top:660.2px;width:22.3px;height:21.8px;background:#202c42;border-radius:6px;"></div>
<div class="t" style="left:1166.0px;top:663.3px;color:#e6e6e6;">Auto-scroll</div>
<div class="a" style="left:1241.0px;top:660.2px;width:41.3px;height:21.8px;background:#2b5282;border-radius:6px;"></div>
<div class="t" style="left:1241.0px;width:41.3px;text-align:center;top:663.1px;color:#e6e6e6">Clear</div>
<div class="a" style="left:1291.3px;top:660.4px;width:39.4px;height:21.6px;background:#2b5282;border-radius:6px;"></div>
<div class="t" style="left:1291.3px;width:39.4px;text-align:center;top:663.2px;color:#e6e6e6">Copy</div>
<div class="a" style="left:1138.6px;top:687.0px;width:324.4px;height:21.8px;background:#202c42;border-radius:6px;"></div>
<div class="t" style="left:1467.6px;top:690.0px;color:#e6e6e6;">Filter</div>
<div class="a" style="left:1130px;top:713px;width:440px;height:140.5px;overflow:hidden">
<div class="t" style="left:8.6px;top:1.6px;font-size:13.5px;color:#e4e4e4"><span style="letter-spacing:-0.15px">[0.52] [INFO]</span>  <span style="font-size:13.7px">[Logger] stream_logger</span></div>
<div class="t" style="left:8.6px;top:17.7px;font-size:13.5px;color:#4d86e8"><span style="letter-spacing:-0.32px">[3.05] [DEBUG]</span>  <span style="font-size:13.7px">Retrieving available cameras</span></div>
<div class="t" style="left:8.6px;top:33.9px;font-size:13.5px;color:#e4e4e4"><span style="letter-spacing:-0.15px">[5.35] [INFO]</span>  <span style="font-size:13.7px">Initializing camera</span></div>
<div class="t" style="left:8.6px;top:50.0px;font-size:13.5px;color:#e4e4e4"><span style="letter-spacing:-0.15px">[8.08] [INFO]</span>  <span style="font-size:13.7px">Camera Specim-FX17e-076900048460 intialized OK</span></div>
<div class="t" style="left:8.6px;top:66.1px;font-size:13.5px;color:#4d86e8"><span style="letter-spacing:-0.32px">[9.62] [DEBUG]</span>  <span style="font-size:13.7px">Trying to start streaming</span></div>
<div class="t" style="left:8.6px;top:82.2px;font-size:13.5px;color:#4d86e8"><span style="letter-spacing:-0.32px">[9.62] [DEBUG]</span>  <span style="font-size:13.7px">Streaming start OK</span></div>
<div class="t" style="left:8.6px;top:98.4px;font-size:13.5px;color:#4d86e8"><span style="letter-spacing:-0.32px">[9.64] [DEBUG]</span>  <span style="font-size:13.7px">Opening share memory buffer with ID: 6000</span></div>
<div class="t" style="left:8.6px;top:114.5px;font-size:13.5px;color:#4d86e8"><span style="letter-spacing:-0.32px">[9.64] [DEBUG]</span>  <span style="font-size:13.7px">Opening share memory buffer with ID: 6001</span></div>
<div class="t" style="left:8.6px;top:130.6px;font-size:13.5px;color:#4d86e8"><span style="letter-spacing:-0.32px">[9.64] [DEBUG]</span>  <span style="font-size:13.7px">Opening share memory buffer with ID: 6002</span></div>
</div>
<div class="a" style="left:1567.5px;top:716.8px;width:3.0px;height:68.2px;background:#4a5a7e;"></div>
<div class="a" style="left:1141.6px;top:855.3px;width:421.4px;height:3.7px;background:#4e5f85;"></div>
<div class="t" style="left:16.3px;top:874.8px;color:#e0e0e0;">Spectral Studio</div>
<div class="t" style="left:119.3px;top:874.8px;color:#e0e0e0;">0.1</div>
<div class="t" style="left:173.4px;top:874.8px;color:#e0e0e0;">motor connected [0]</div>
<div class="t" style="left:345.8px;top:874.8px;color:#e0e0e0;">Specim-FX17e</div>
<div class="t" style="left:490.6px;top:874.8px;color:#6c9fb6;">streaming</div>
<div class="t" style="left:602.0px;top:874.8px;color:#3e4249;">not capturing</div>
<div class="t" style="left:725.0px;top:874.8px;color:#89a97a;">Status OK</div>
<div class="a" style="left:155.0px;top:877.5px;width:1.2px;height:12.5px;background:#3a3e46;"></div>
<div class="a" style="left:314.5px;top:877.5px;width:1.2px;height:12.5px;background:#3a3e46;"></div>
<div class="a" style="left:462.4px;top:877.5px;width:1.2px;height:12.5px;background:#3a3e46;"></div>
<div class="a" style="left:580.5px;top:877.5px;width:1.2px;height:12.5px;background:#3a3e46;"></div>
<div class="a" style="left:703.7px;top:877.5px;width:1.2px;height:12.5px;background:#3a3e46;"></div>
<div class="a" style="left:807.8px;top:877.5px;width:1.2px;height:12.5px;background:#3a3e46;"></div>
</body></html>
